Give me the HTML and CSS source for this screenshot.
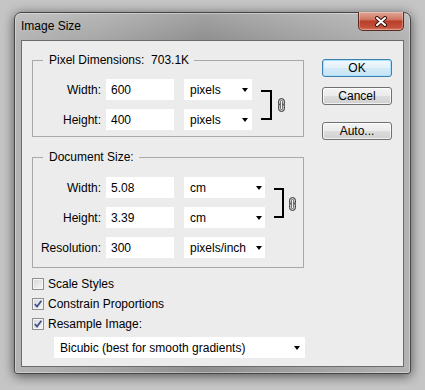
FILE: index.html
```html
<!DOCTYPE html>
<html lang="en">
<head>
  <meta charset="UTF-8" />
  <meta name="viewport" content="width=device-width, initial-scale=1.0" />
  <title>Image Size</title>
  <link rel="stylesheet" href="styles.css">
</head>
<body>
  <div class="window">
    <div class="titlebar">
      <span class="title">Image Size</span>
      <span class="close">
        <svg width="14" height="11" viewBox="0 0 14 11">
          <path d="M3 2 L11 9 M11 2 L3 9" stroke="#3a1711" stroke-width="4" stroke-linecap="round" />
          <path d="M3 2 L11 9 M11 2 L3 9" stroke="#fff" stroke-width="2" stroke-linecap="round" />
        </svg>
      </span>
    </div>

    <div class="client">
      <div class="main">
        <fieldset class="group">
          <legend>Pixel Dimensions:&nbsp;&nbsp;703.1K</legend>
          <div class="linked">
            <div class="rows">
              <div class="row">
                <label>Width:</label>
                <input type="text" value="600" />
                <div class="dropdown"><span>pixels</span></div>
              </div>
              <div class="row">
                <label>Height:</label>
                <input type="text" value="400" />
                <div class="dropdown"><span>pixels</span></div>
              </div>
            </div>
            <span class="bracket"></span>
            <svg class="chain" width="7" height="14" viewBox="0 0 7 14">
              <rect x="0.5" y="0.5" width="6" height="8" rx="3" fill="#c4c4c4" stroke="#3a3a3a" />
              <rect x="0.5" y="5.5" width="6" height="8" rx="3" fill="#c4c4c4" stroke="#3a3a3a" />
              <rect x="2.5" y="2.5" width="2" height="9" rx="1" fill="#f4f4f4" stroke="#555" stroke-width="0.8" />
            </svg>
          </div>
        </fieldset>

        <fieldset class="group group-doc">
          <legend>Document Size:</legend>
          <div class="linked">
            <div class="rows">
              <div class="row">
                <label>Width:</label>
                <input type="text" value="5.08" />
                <div class="dropdown"><span>cm</span></div>
              </div>
              <div class="row">
                <label>Height:</label>
                <input type="text" value="3.39" />
                <div class="dropdown"><span>cm</span></div>
              </div>
            </div>
            <span class="bracket"></span>
            <svg class="chain" width="7" height="14" viewBox="0 0 7 14">
              <rect x="0.5" y="0.5" width="6" height="8" rx="3" fill="#c4c4c4" stroke="#3a3a3a" />
              <rect x="0.5" y="5.5" width="6" height="8" rx="3" fill="#c4c4c4" stroke="#3a3a3a" />
              <rect x="2.5" y="2.5" width="2" height="9" rx="1" fill="#f4f4f4" stroke="#555" stroke-width="0.8" />
            </svg>
          </div>
          <div class="row row-res">
            <label>Resolution:</label>
            <input type="text" value="300" />
            <div class="dropdown"><span>pixels/inch</span></div>
          </div>
        </fieldset>

        <div class="options">
          <div class="check">
            <span class="box"></span>
            <span>Scale Styles</span>
          </div>
          <div class="check">
            <span class="box">
              <svg width="10" height="10" viewBox="0 0 10 10"><path d="M1.8 5 L4 7.6 L8.4 1.8" fill="none" stroke="#3d508c" stroke-width="1.7" /></svg>
            </span>
            <span>Constrain Proportions</span>
          </div>
          <div class="check">
            <span class="box">
              <svg width="10" height="10" viewBox="0 0 10 10"><path d="M1.8 5 L4 7.6 L8.4 1.8" fill="none" stroke="#3d508c" stroke-width="1.7" /></svg>
            </span>
            <span>Resample Image:</span>
          </div>
        </div>

        <div class="dropdown dropdown-wide"><span>Bicubic (best for smooth gradients)</span></div>
      </div>

      <div class="buttons">
        <button class="btn btn-default">OK</button>
        <button class="btn btn-cancel">Cancel</button>
        <button class="btn btn-auto">Auto...</button>
      </div>
    </div>
  </div>
</body>
</html>
```

FILE: styles.css
```css
:root {
  --panel: #ececec;
  --line: #a9a9a9;
  --text: #000000;
}

body {
  margin: 0;
  padding: 12px 14px;
  background: #c5c5c5;
  font-family: "Liberation Sans", Arial, sans-serif;
  font-size: 12px;
  color: var(--text);
}

.window {
  width: 397px;
  height: 362px;
  box-sizing: border-box;
  display: flex;
  flex-direction: column;
  padding: 0 6px 6px;
  border: 1px solid #474747;
  border-radius: 7px 7px 3px 3px;
  background:
    linear-gradient(rgba(255, 255, 255, 0.18), rgba(255, 255, 255, 0) 28px),
    linear-gradient(90deg, #b4b4b4, #a6a6a6 22%, #8f8f8f 48%, #a1a1a1 72%, #b3b3b3);
  box-shadow: 0 2px 12px rgba(0, 0, 0, 0.6), inset 0 0 0 1px rgba(255, 255, 255, 0.35);
}

.titlebar {
  height: 27px;
  display: flex;
  justify-content: space-between;
  align-items: flex-start;
}

.title {
  line-height: 27px;
}

.close {
  width: 46px;
  height: 19px;
  margin-top: -1px;
  box-sizing: border-box;
  display: flex;
  align-items: center;
  justify-content: center;
  border: 1px solid #5a2a22;
  border-top: none;
  border-radius: 0 0 5px 5px;
  background: linear-gradient(#e3a696, #d17865 40%, #bb3f2a 52%, #c2513b 85%, #d87a62);
  box-shadow: inset 0 0 0 1px rgba(255, 255, 255, 0.3);
}

.client {
  flex: 1;
  display: flex;
  align-items: flex-start;
  padding: 12px 11px 8px 10px;
  background: var(--panel);
  border: 1px solid #6c6c6c;
}

.main {
  width: 272px;
}

.group {
  margin: 0;
  padding: 12px 0 6px;
  border: 1px solid var(--line);
  min-width: 0;
}

.group legend {
  margin-left: 10px;
  padding: 0 5px 0 6px;
  line-height: 14px;
}

.group-doc {
  margin-top: 13px;
  padding: 13px 0 9px;
}

.linked {
  display: flex;
  align-items: flex-start;
}

.rows {
  display: flex;
  flex-direction: column;
  gap: 9px;
}

.row {
  display: flex;
  align-items: center;
  height: 21px;
}

.row label {
  width: 73px;
  box-sizing: border-box;
  padding-right: 5px;
  text-align: right;
}

.row input {
  width: 68px;
  height: 21px;
  box-sizing: border-box;
  padding: 0 5px;
  border: none;
  outline: none;
  background: #fff;
  font: inherit;
  color: var(--text);
}

.dropdown {
  width: 68px;
  height: 21px;
  box-sizing: border-box;
  margin-left: 10px;
  padding: 0 4px 0 6px;
  display: flex;
  align-items: center;
  justify-content: space-between;
  background: #fff;
}

.dropdown::after {
  content: "";
  border-left: 3.5px solid transparent;
  border-right: 3.5px solid transparent;
  border-top: 4px solid #000;
}

.group-doc .dropdown {
  width: 81px;
  padding-right: 3px;
}

.row-res {
  margin-top: 9px;
}

.bracket {
  width: 11px;
  height: 30px;
  box-sizing: border-box;
  margin: 11px 0 0 9px;
  border: 2px solid #000;
  border-left: none;
}

.chain {
  margin: 19px 0 0 6px;
}

.group-doc .bracket {
  width: 10px;
}

.group-doc .chain {
  margin: 20px 0 0 5px;
}

.options {
  margin-top: 6px;
}

.check {
  display: flex;
  align-items: center;
  gap: 4px;
  height: 20px;
}

.box {
  width: 12px;
  height: 12px;
  box-sizing: border-box;
  display: flex;
  align-items: center;
  justify-content: center;
  border: 1px solid #8f8f8f;
  background: linear-gradient(135deg, #d6d6d6, #f6f6f6);
  box-shadow: inset 0 0 0 1px #f4f4f4;
}

.dropdown-wide {
  width: 251px;
  margin: 3px 0 0 22px;
  padding-right: 5px;
}

.buttons {
  display: flex;
  flex-direction: column;
  margin-left: 18px;
  padding-top: 6px;
}

.btn {
  width: 70px;
  height: 18px;
  padding: 0;
  border: 1px solid #707070;
  border-radius: 3px;
  background: linear-gradient(#f4f4f4, #ebebeb 48%, #dddddd 52%, #cfcfcf);
  box-shadow: inset 0 0 0 1px rgba(255, 255, 255, 0.7);
  font: inherit;
  color: var(--text);
}

.btn-default {
  border-color: #3c7fb1;
  background: linear-gradient(#f1f8fc, #e3f1f9 48%, #d4eaf6 52%, #c8e3f3);
  box-shadow: inset 0 0 0 1px #a9e2fb;
}

.btn-cancel {
  margin-top: 10px;
}

.btn-auto {
  margin-top: 17px;
}
```
